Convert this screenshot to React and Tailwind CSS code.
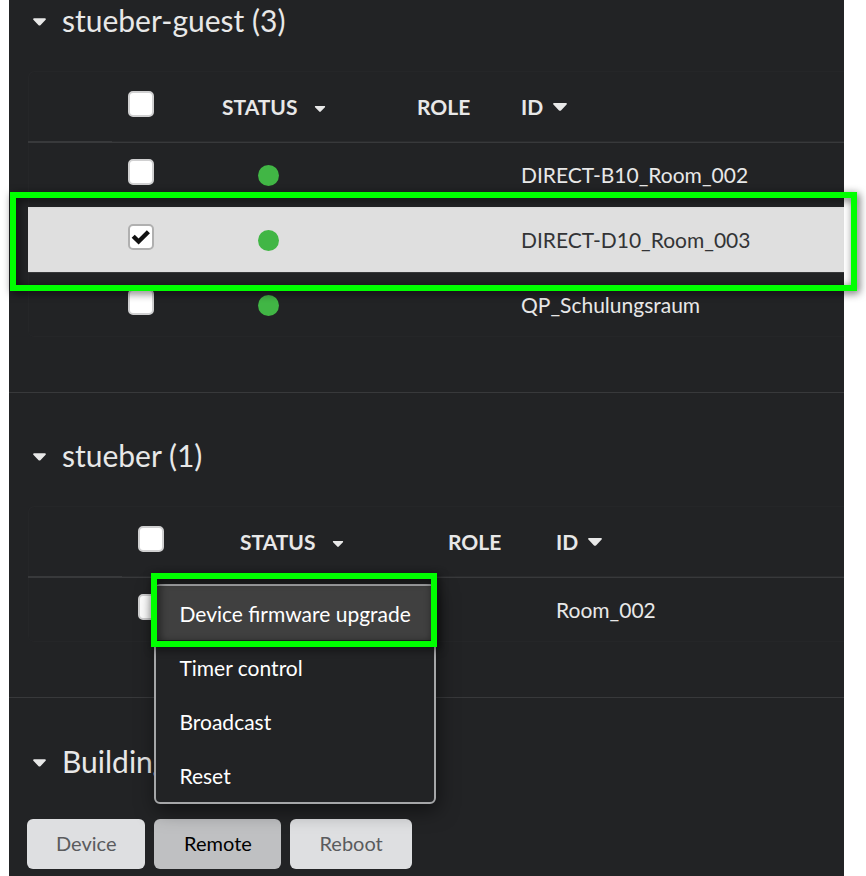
import React from "react";

function Caret({ className }) {
  return (
    <svg viewBox="0 0 14 8" className={className} fill="currentColor" aria-hidden="true">
      <path d="M1.2 0h11.6c1 0 1.4 1 .8 1.6L8 7.4c-.6.6-1.4.6-2 0L.4 1.6C-.2 1 .2 0 1.2 0z" />
    </svg>
  );
}

function Tick({ label, checked = false }) {
  return (
    <span className="relative mb-[7px] block size-[26px]">
      <input
        type="checkbox"
        aria-label={label}
        defaultChecked={checked}
        className="peer block size-[26px] appearance-none rounded-[5px] border-2 border-[#d0d0d1] bg-white checked:border-[#b0b0b0]"
      />
      <svg
        viewBox="0 0 26 26"
        className="pointer-events-none absolute inset-0 hidden peer-checked:block"
        fill="none"
        stroke="#111"
        strokeWidth="4.4"
        aria-hidden="true"
      >
        <path d="M5.2 12.2l5.400 5.300L20.400 7.800" strokeLinejoin="miter" />
      </svg>
    </span>
  );
}

function DeviceTable({ name, widths, rows }) {
  const head = "px-4 pt-[2px] border-b border-[#2a2b2d]";
  return (
    <table className="w-full table-fixed border-separate border-spacing-0 rounded-tl-md rounded-bl-md text-left text-[21px] leading-7 shadow-[inset_1px_1px_0_#252628,inset_0_-1px_0_#252628]">
      <colgroup>
        {widths.map((w, i) => (
          <col key={i} style={{ width: w }} />
        ))}
        <col />
      </colgroup>
      <thead>
        <tr className="h-[71px]">
          <td className="border-b border-[#38393b]" />
          <th className={head}>
            <Tick label={`Select all in ${name}`} />
          </th>
          <th className={head}>
            <button type="button" className="flex items-center gap-[17px] font-bold">
              STATUS <Caret className="mt-1 h-[6px] w-[12px]" />
            </button>
          </th>
          <th className={head}>ROLE</th>
          <th className={head}>
            <button type="button" className="flex items-center gap-[10px] font-bold">
              ID <Caret className="h-[8px] w-[14px]" />
            </button>
          </th>
        </tr>
      </thead>
      <tbody>
        {rows.map((row) => {
          const edge = row.selected ? "border-t border-[#dfdfdf]" : "border-t border-[#38393b]";
          return (
            <tr key={row.id} className={row.selected ? "h-[65px] bg-[#dfdfdf] text-[#333436]" : "h-[65px]"}>
              <td className={edge} />
              <td className={`px-4 ${edge}`}>
                <Tick label={`Select ${row.id}`} checked={row.selected} />
              </td>
              <td className={`pl-[52px] ${edge}`}>
                <span role="img" aria-label="online" className="block size-[21px] rounded-full bg-[#41b645]" />
              </td>
              <td className={edge} />
              <td className={`px-4 ${edge}`}>{row.id}</td>
            </tr>
          );
        })}
      </tbody>
    </table>
  );
}

function GroupTitle({ children }) {
  return (
    <h2 className="pb-[2px] text-[30px] leading-[40px]">
      <button type="button" className="flex items-center gap-4 pl-6">
        <Caret className="mt-1 h-[8px] w-[13px]" />
        {children}
      </button>
    </h2>
  );
}

const highlight = "pointer-events-none absolute border-[6px] border-[#00ff00] drop-shadow-[2px_2px_4px_rgba(0,0,0,0.65)]";
const menuItem = "block h-[54px] w-full px-[23px] pt-[2px] text-left whitespace-nowrap";
const action = "h-[50px] rounded-md px-[29px] pb-[2px]";

export default function App() {
  return (
    <div className="min-h-screen bg-white pr-[22px] pl-[9px] font-[Lato,sans-serif]">
      <main className="min-h-screen bg-[#222325] text-[#e8e8e8]">
        <section className="border-b border-[#38393b] pb-[55px]">
          <GroupTitle>stueber-guest (3)</GroupTitle>
          <div className="relative mt-[29px] ml-[19px]">
            <DeviceTable
              name="stueber-guest"
              widths={[84, 94, 195, 104]}
              rows={[
                { id: "DIRECT-B10_Room_002" },
                { id: "DIRECT-D10_Room_003", selected: true },
                { id: "QP_Schulungsraum" },
              ]}
            />
            <div className={`${highlight} top-[121px] -right-[13px] -left-[18px] h-[99px]`} />
          </div>
        </section>

        <section className="border-b border-[#38393b] pt-[42px] pb-[55px]">
          <GroupTitle>stueber (1)</GroupTitle>
          <div className="mt-[29px] ml-[19px]">
            <DeviceTable name="stueber" widths={[94, 102, 208, 108]} rows={[{ id: "Room_002" }]} />
          </div>
        </section>

        <section className="pt-[43px]">
          <GroupTitle>Building</GroupTitle>
        </section>

        <div className="mt-9 flex gap-[9px] pb-[7px] pl-[18px] text-[20px]">
          <button type="button" className={`${action} bg-[#dedfe1] text-[#5a5b5d]`}>Device</button>
          <div className="relative">
            <button type="button" className={`${action} min-w-[127px] bg-[#bfc0c2] text-black`}>
              Remote
            </button>
            <div className="absolute bottom-full left-0 mb-[15px] w-[282px] rounded-md border-2 border-[#a5a6a8] bg-[#222325] text-[21px] text-white shadow-[2px_6px_20px_rgba(0,0,0,0.5)]">
              <button type="button" className={`${menuItem} bg-[#404040]`}>Device firmware upgrade</button>
              <button type="button" className={menuItem}>Timer control</button>
              <button type="button" className={menuItem}>Broadcast</button>
              <button type="button" className={menuItem}>Reset</button>
              <div className={`${highlight} -top-[13px] -left-[5px] h-[74px] w-[286px]`} />
            </div>
          </div>
          <button type="button" className={`${action} bg-[#dedfe1] text-[#5a5b5d]`}>Reboot</button>
        </div>
      </main>
    </div>
  );
}
